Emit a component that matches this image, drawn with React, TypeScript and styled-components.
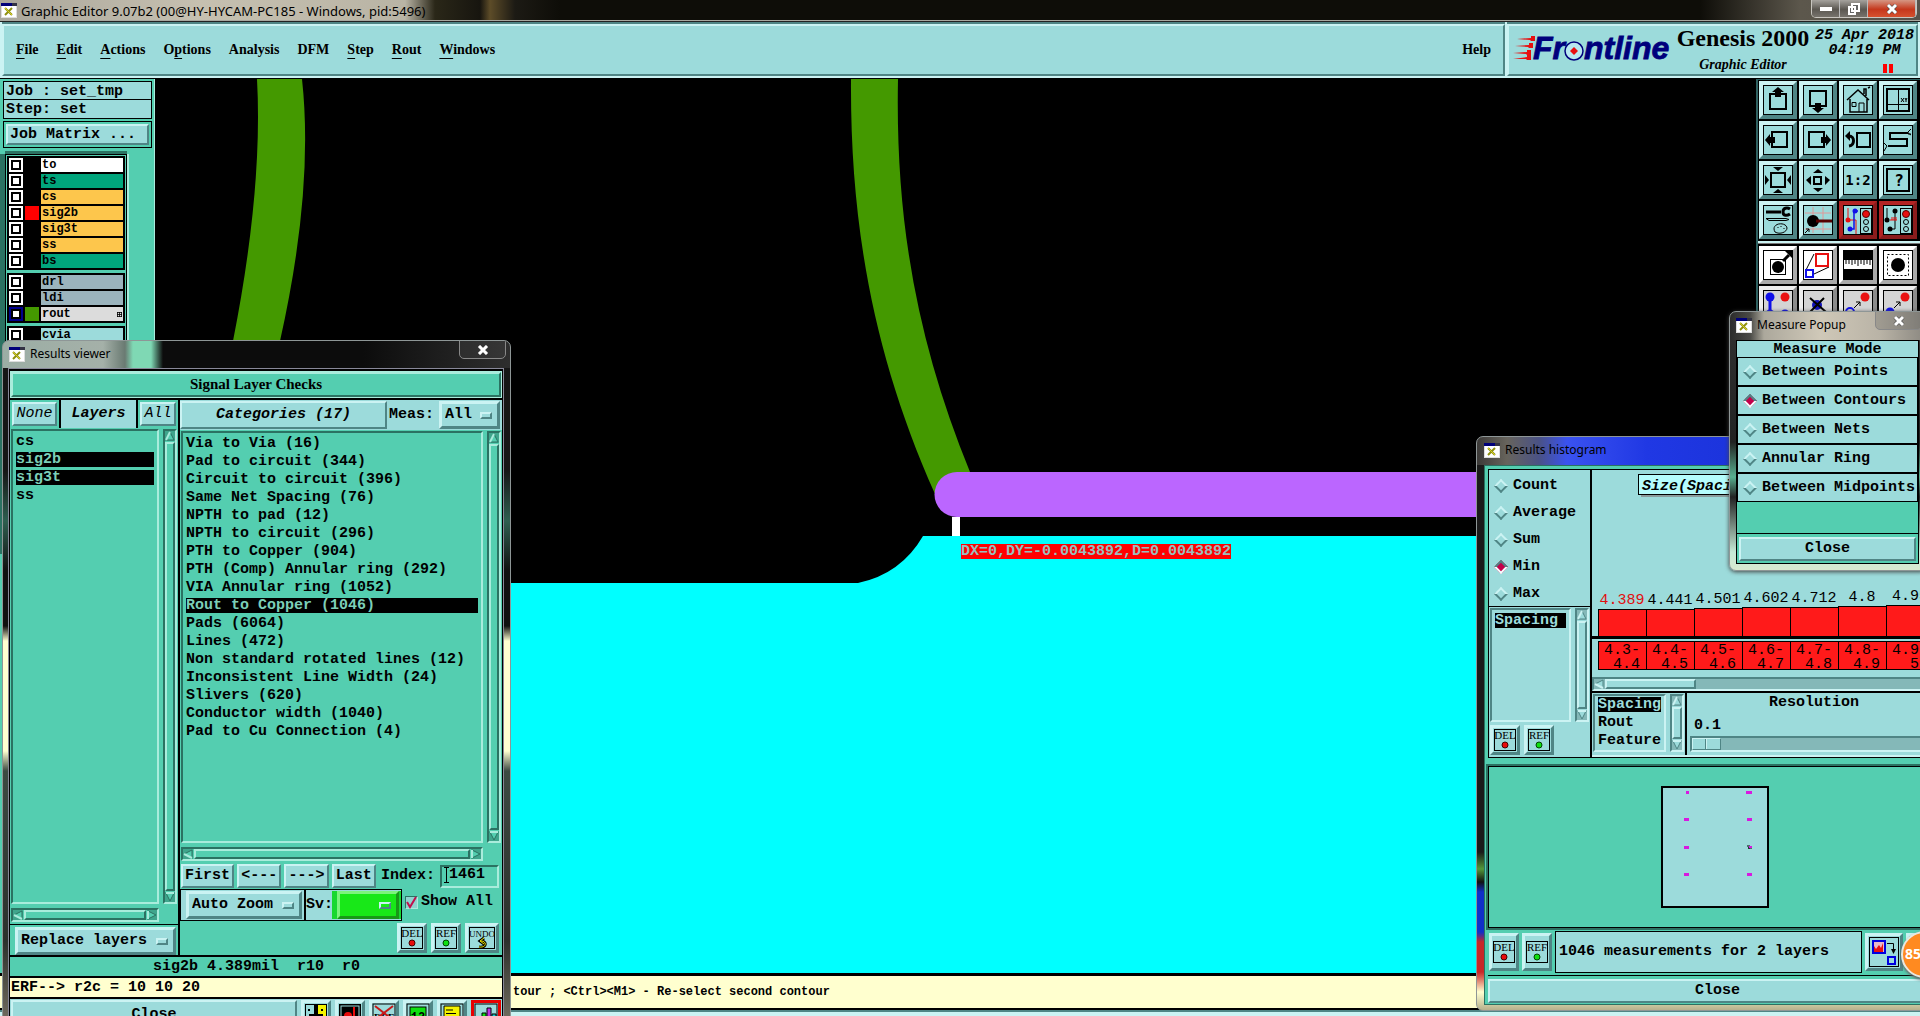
import React from "react";
import styled, { createGlobalStyle, css } from "styled-components";

const aqua = "#9cdbdb";
const aquaLight = "#cbf3f3";
const aquaDark = "#4f8585";
const green = "#54ceb0";
const greenLight = "#a9ecdc";
const greenDark = "#2b7262";
const mono = `"Liberation Mono", "Courier New", monospace`;
const serif = `"Liberation Serif", "Times New Roman", serif`;
const ui = `"Noto Sans", "Open Sans", sans-serif`;

const Global = createGlobalStyle`
  *, *::before, *::after { box-sizing: border-box; }
  html, body { margin: 0; height: 100%; overflow: hidden; background: #000; }
  body { font: bold 15px/18px ${mono}; color: #000; }
  button, input, select { font: inherit; color: inherit; margin: 0; padding: 0; }
  ul { list-style: none; margin: 0; padding: 0; }
  svg { display: block; flex: none; }
`;

const raised = css`
  background: ${aqua};
  border: 3px solid;
  border-color: ${aquaLight} ${aquaDark} ${aquaDark} ${aquaLight};
`;

/* ---------- main window ---------- */
const Page = styled.div`
  position: relative;
  display: flex;
  flex-direction: column;
  height: 100vh;
  overflow: hidden;
`;
const TitleBar = styled.header`
  display: flex;
  align-items: center;
  height: 22px;
  padding-left: 1px;
  gap: 4px;
  font: 13px/20px ${ui};
  border-bottom: 1px solid #222;
  box-shadow: inset 0 -1px #a8a8a0;
  background: linear-gradient(90deg, #aaa69b 0, #c6c0b0 200px, #b9b4a5 405px, #2a2718 435px, #17150f 480px, #5d4c28 490px, #1c1a14 515px, #0e0d08 560px, #0e0d08 1700px, #5c574c 1800px, #56524b 100%);
`;
const TitleText = styled.span`
  flex: 1;
`;
const WinButtons = styled.div`
  display: flex;
  align-self: flex-start;
  height: 18px;
  margin-right: 3px;
  border: 1px solid #c9c6c0;
  border-top: 0;
  border-radius: 0 0 5px 5px;
  overflow: hidden;
`;
const WinButton = styled.button<{ $close?: boolean }>`
  width: ${(p) => (p.$close ? 48 : 28)}px;
  display: flex;
  align-items: center;
  justify-content: center;
  border: 0;
  border-right: 1px solid #bbb;
  background: ${(p) =>
    p.$close
      ? "linear-gradient(#d59683, #c5371c 55%, #d6512f)"
      : "linear-gradient(#a5a29d, #5b5751 55%, #77736c)"};
`;
const MenuRow = styled.div`
  display: flex;
  height: 57px;
  background: ${aquaLight};
  border-bottom: 1px solid #000;
`;
const Bar = styled.div`
  display: flex;
  align-items: center;
  background: ${aqua};
  border: 2px solid;
  border-color: ${aquaLight} ${aquaDark} ${aquaDark} ${aquaLight};
  margin: 2px 2px 2px 0;
  box-shadow: 0 -2px ${aquaDark};
`;
const MenuBar = styled(Bar)`
  flex: 1;
  margin-left: 2px;
  padding: 0 12px;
  gap: 18px;
  font: bold 14px/18px ${serif};
`;
const MenuItem = styled.button<{ $last?: boolean }>`
  border: 0;
  background: none;
  margin-left: ${(p) => (p.$last ? "auto" : 0)};
  text-underline-offset: 4px;
`;
const Brand = styled(Bar)`
  width: 411px;
  padding-left: 4px;
  align-items: flex-start;
`;
const Product = styled.div`
  width: 140px;
  text-align: center;
  font: bold 14px/18px ${serif};
`;
const ProductName = styled.div`
  font-size: 24px;
  line-height: 24px;
`;
const ProductSub = styled.div`
  font-style: italic;
  padding-top: 6px;
`;
const Clock = styled.div`
  flex: 1;
  text-align: center;
  font-style: italic;
  line-height: 15px;
  padding-top: 2px;
  white-space: nowrap;
`;
const Pause = styled.div`
  width: 10px;
  height: 9px;
  margin: 6px 0 0 70px;
  border: solid #f00;
  border-width: 0 4px;
`;
const Work = styled.main`
  display: flex;
  flex: 1;
  min-height: 0;
`;
const LeftPanel = styled.aside`
  width: 155px;
  background: ${green};
  padding: 2px 2px 0 3px;
  overflow: hidden;
  border-right: 1px solid ${greenLight};
`;
const Info = styled.div`
  height: 19px;
  border: 1px solid #000;
  background: ${aqua};
  padding-left: 2px;
  line-height: 19px;
  & + & {
    border-top: 0;
  }
`;
const MatrixFrame = styled.div`
  border: 1px solid #000;
  height: 27px;
  margin-top: 2px;
  padding: 2px;
`;
const MatrixButton = styled.button`
  ${raised}
  display: block;
  width: 100%;
  height: 21px;
  text-align: left;
  border-width: 2px;
  padding-left: 2px;
  line-height: 16px;
`;
const LayerBox = styled.div`
  margin: 6px 25px 0 2px;
  padding: 1px;
  border: 1px solid #000;
  box-shadow: -5px 0 0 ${greenDark}, 0 -3px 0 ${greenDark}, 2px 0 0 ${greenLight};
  height: 400px;
`;
const LayerGroup = styled.div`
  background: #000;
  padding: 1px 2px 1px 2px;
  margin-bottom: 3px;
`;
const LayerRow = styled.label`
  display: flex;
  align-items: center;
  height: 16px;
  gap: 2px;
  font-size: 12px;
`;
const LayerCheck = styled.input<{ $active?: boolean }>`
  appearance: none;
  width: 14px;
  height: 14px;
  background: #fff;
  border: 2px solid ${(p) => (p.$active ? "#00008c" : "#fff")};
  outline: 2px solid #000;
  outline-offset: -4px;
`;
const Swatch = styled.span<{ $c: string }>`
  width: 14px;
  height: 14px;
  background: ${(p) => p.$c};
`;
const LayerName = styled.span<{ $c: string }>`
  flex: 1;
  display: flex;
  align-items: center;
  justify-content: space-between;
  height: 14px;
  line-height: 14px;
  padding: 0 1px;
  background: ${(p) => p.$c};
`;
const Canvas = styled.section`
  flex: 1;
  min-width: 0;
  position: relative;
  background: #000;
`;
const Plot = styled.svg`
  width: 100%;
  height: 100%;
`;
const Reading = styled.output`
  position: absolute;
  left: 806px;
  top: 465px;
  background: #f00;
  color: #9cbcbc;
  line-height: 15px;
`;
const Tools = styled.aside`
  width: 164px;
  background: #000;
  border-left: 2px solid #2f6262;
  overflow: hidden;
`;
const ToolGrid = styled.div<{ $grey?: boolean }>`
  display: grid;
  grid-template-columns: repeat(4, 38px);
  gap: 2px;
  padding: ${(p) => (p.$grey ? 2 : 1)}px 0 2px 1px;
  border-top: 1px solid ${(p) => (p.$grey ? "#777" : "#2f6262")};
  border-bottom: 2px solid ${(p) => (p.$grey ? "#777" : aquaLight)};
`;
const ToolButton = styled.button<{ $tone?: "red" | "white" | "grey" }>`
  ${raised}
  width: 38px;
  height: 38px;
  border-width: 4px;
  ${(p) =>
    p.$tone === "red" &&
    css`
      border-color: #b32424 #8a1c1c #8a1c1c #b32424;
    `}
  ${(p) =>
    p.$tone === "white" &&
    css`
      background: #fff;
      border-color: #fff #aaa #aaa #fff;
    `}
  ${(p) =>
    p.$tone === "grey" &&
    css`
      background: #d4d4d4;
      border-color: #eee #8b8b8b #8b8b8b #eee;
    `}
`;
const StatusBar = styled.footer`
  height: 37px;
  padding-left: 513px;
  border: solid #000;
  border-width: 3px 0 2px;
  background: #ffffcf;
  font-size: 12px;
  line-height: 32px;
  white-space: pre;
`;
const BottomStrip = styled.div`
  height: 6px;
  border-top: 2px solid ${aquaDark};
  background: ${aquaLight};
`;

/* ---------- floating windows ---------- */
const Window = styled.section`
  position: absolute;
  display: flex;
  flex-direction: column;
  border: 1px solid #8e9696;
  border-radius: 7px;
  overflow: hidden;
`;
const Caption = styled.div`
  display: flex;
  gap: 5px;
  height: 28px;
  margin-right: -3px;
  padding-top: 6px;
  font: 12px/14px ${ui};
`;
const CaptionText = styled.span`
  flex: 1;
`;
const CaptionClose = styled.button`
  width: 47px;
  height: 19px;
  margin-top: -7px;
  display: flex;
  justify-content: center;
  align-items: center;
  border: 1px solid #888;
  border-radius: 0 0 5px 5px;
  background: rgba(80, 80, 80, 0.25);
`;
const Push = styled.button<{ $w?: number; $plain?: boolean }>`
  ${raised}
  border-width: 2px;
  width: ${(p) => (p.$w ? p.$w + "px" : "auto")};
  font-weight: ${(p) => (p.$plain ? 400 : 700)};
  height: 24px;
  line-height: 20px;
`;
const IconPush = styled.button<{ $w?: number; $red?: boolean }>`
  ${raised}
  display: flex;
  flex: none;
  align-items: center;
  justify-content: center;
  width: ${(p) => p.$w ?? 30}px;
  height: 30px;
  ${(p) => p.$red && "border-color:#e80000;"}
`;
const Option = styled.label<{ $green?: boolean }>`
  ${raised}
  ${(p) => p.$green && "background:#18e818;border-color:#7cf47c #189818 #189818 #7cf47c;"}
  display: flex;
  align-items: center;
  height: 28px;
  padding: 0 5px 0 3px;
  &::after {
    content: "";
    width: 12px;
    height: 7px;
    flex: none;
    border: 2px solid;
    border-color: ${aquaLight} ${aquaDark} ${aquaDark} ${aquaLight};
  }
`;
const Select = styled.select`
  appearance: none;
  flex: 1;
  min-width: 0;
  border: 0;
  background: none;
`;

/* scroll bars */
const Track = styled.div<{ $v?: boolean; $c: "g" | "a"; $trough?: boolean }>`
  display: flex;
  flex-direction: ${(p) => (p.$v ? "column" : "row")};
  ${(p) => (p.$v ? "width:14px;" : "height:14px;")}
  border: 2px solid;
  gap: 1px;
  flex: none;
  background: ${(p) => (p.$trough ? "#84b8b8" : "none")};
  border-color: ${(p) =>
    p.$c === "g"
      ? `${greenDark} ${greenLight} ${greenLight} ${greenDark}`
      : `${aquaDark} ${aquaLight} ${aquaLight} ${aquaDark}`};
`;
const Thumb = styled.div<{ $c: "g" | "a"; $w?: number }>`
  flex: ${(p) => (p.$w ? "none" : 1)};
  ${(p) => p.$w && `width:${p.$w}px;`}
  background: ${(p) => (p.$c === "g" ? green : aqua)};
  border: 2px solid;
  border-color: ${(p) =>
    p.$c === "g"
      ? `${greenLight} ${greenDark} ${greenDark} ${greenLight}`
      : `${aquaLight} ${aquaDark} ${aquaDark} ${aquaLight}`};
`;
const ArrowButton = styled.button`
  border: 0;
  background: none;
  height: 10px;
  width: 10px;
  flex: none;
`;
const rot = { up: 0, right: 90, down: 180, left: 270 };
function Arrow({ dir, c }: { dir: keyof typeof rot; c: "g" | "a" }) {
  const l = c === "g" ? greenLight : aquaLight;
  const d = c === "g" ? greenDark : aquaDark;
  return (
    <ArrowButton aria-label={"Scroll " + dir}>
      <svg width="10" height="10" viewBox="0 0 10 10">
        <rect width="10" height="10" fill={c === "g" ? "#3fa58c" : "#84b8b8"} />
        <g transform={`rotate(${rot[dir]} 5 5)`}>
          <path d="M5 1 9 9H1z" fill={c === "g" ? green : aqua} stroke={d} />
          <path d={dir === "down" || dir === "right" ? "M1 9H9" : "M5 1 1 9"} stroke={l} strokeWidth="2" />
        </g>
      </svg>
    </ArrowButton>
  );
}
function Scroll({ v, c = "g", w, noEnd }: { v?: boolean; c?: "g" | "a"; w?: number; noEnd?: boolean }) {
  return (
    <Track $v={v} $c={c} $trough={!!w}>
      <Arrow dir={v ? "up" : "left"} c={c} />
      <Thumb $c={c} $w={w} />
      {!noEnd && <Arrow dir={v ? "down" : "right"} c={c} />}
    </Track>
  );
}

/* ---------- results viewer ---------- */
const Viewer = styled(Window)`
  left: 2px;
  top: 340px;
  bottom: -22px;
  width: 509px;
  padding: 0 7px 7px 6px;
  background: linear-gradient(90deg, rgba(170, 190, 180, 0.9) 0, rgba(200, 215, 205, 0.8) 100px, #6a7a72 122px, #7fd8b4 130px, #7fd8b4 148px, #0c0c0c 160px, #0c0c0c 360px, #2e2e2e) top / 100% 27px no-repeat,
    linear-gradient(#161616 0, #161616 130px, #2f5f50 180px, #101010 230px, #101010 285px, #ffffd0 300px, #ffffd0 410px, #3c4a42 430px, #2c302c 600px, #80796a);
`;
const ViewerBody = styled.div`
  flex: 1;
  min-height: 0;
  display: flex;
  flex-direction: column;
  gap: 2px;
  padding: 2px 1px 0;
  background: #000;
  box-shadow: 0 0 0 1px #889;
`;
const Heading = styled.h1`
  margin: 0;
  height: 27px;
  border: 3px solid;
  border-color: ${greenLight} ${greenDark} ${greenDark} ${greenLight};
  outline: 1px solid ${greenLight};
  outline-offset: -1px;
  background: ${green};
  text-align: center;
  font: bold 15px/20px ${serif};
`;
const Columns = styled.div`
  flex: 1;
  min-height: 0;
  display: grid;
  grid-template-columns: 168px minmax(0, 1fr);
  gap: 2px;
`;
const Column = styled.div`
  display: flex;
  flex-direction: column;
  min-height: 0;
  min-width: 0;
  background: ${green};
`;
const LayerHead = styled.div`
  display: flex;
  gap: 2px;
  height: 28px;
  background: #000;
  font-style: italic;
`;
const HeadCell = styled.div`
  background: ${green};
  padding: 2px;
`;
const HeadTitle = styled.div`
  flex: 1;
  background: ${aqua};
  text-align: center;
  line-height: 27px;
`;
const ListArea = styled.div`
  flex: 1;
  min-height: 0;
  display: grid;
  grid-template-columns: 1fr 14px;
  grid-template-rows: 1fr auto;
  gap: 4px;
  padding: 1px 1px 2px;
`;
const List = styled.ul<{ $c?: "a"; $tight?: boolean }>`
  min-height: 0;
  overflow: hidden;
  padding: ${(p) => (p.$tight ? 1 : 3)}px 3px;
  border: 2px solid;
  border-color: ${(p) =>
    p.$c ? `${aquaDark} ${aquaLight} ${aquaLight} ${aquaDark}` : `${greenDark} ${greenLight} ${greenLight} ${greenDark}`};
`;
const Item = styled.li<{ $sel?: boolean; $c?: string }>`
  height: 15px;
  line-height: 15px;
  margin-bottom: 3px;
  white-space: nowrap;
  ${(p) => p.$sel && `background:#000;color:${p.$c ?? "#7ccfb8"};`}
`;
const OptionCell = styled.div`
  height: 31px;
  border-top: 1px solid #000;
  padding: 2px 2px 1px 5px;
  background: ${green};
`;
const CatHead = styled.div`
  display: flex;
  height: 30px;
  align-items: center;
  background: ${aqua};
`;
const CatButton = styled(Push)`
  flex: 1;
  height: 28px;
  font-style: italic;
  border-width: 2px;
`;
const Meas = styled.span`
  padding: 0 5px 0 2px;
`;
const MeasOption = styled.div`
  width: 61px;
  margin-right: 2px;
`;
const NavRow = styled.div`
  display: flex;
  align-items: center;
  gap: 3px;
  height: 26px;
  padding: 0 3px 0 1px;
`;
const IndexLabel = styled.label`
  flex: 1;
  display: flex;
  align-items: center;
  gap: 5px;
  padding-left: 2px;
`;
const IndexBox = styled.span`
  flex: 1;
  display: flex;
  align-items: center;
  height: 23px;
  padding: 0 0 3px 2px;
  border: 2px solid;
  border-color: ${greenDark} ${greenLight} ${greenLight} ${greenDark};
`;
const IndexInput = styled.input`
  width: 48px;
  border: 0;
  background: none;
`;
const ZoomRow = styled.div`
  display: flex;
  align-items: center;
  height: 32px;
`;
const ZoomFrame = styled.div`
  display: flex;
  align-items: center;
  height: 32px;
  border: 1px solid #000;
  background: ${aqua};
`;
const ZoomCell = styled.div<{ $w: number; $bg?: string }>`
  width: ${(p) => p.$w}px;
  padding: 0 2px 0 5px;
  background: ${(p) => p.$bg ?? aqua};
`;
const SvText = styled.span`
  width: 28px;
  line-height: 30px;
  border-left: 2px solid #000;
`;
const ShowAll = styled.label`
  display: flex;
  align-items: center;
  gap: 3px;
  padding: 0 0 6px 3px;
`;
const Check = styled.input`
  appearance: none;
  width: 13px;
  height: 13px;
  background: #8fd3cf;
  border: 1px solid;
  border-color: ${greenDark} ${greenLight} ${greenLight} ${greenDark};
`;
const CheckWrap = styled.span`
  display: grid;
  align-items: center;
  & > * {
    grid-area: 1 / 1;
  }
  & > svg {
    pointer-events: none;
  }
`;
const ActionRow = styled.div`
  display: flex;
  justify-content: flex-end;
  align-items: center;
  gap: 4px;
  height: 34px;
  padding-right: 3px;
`;
const Strip = styled.div<{ $bg: string; $center?: boolean }>`
  height: 19px;
  line-height: 19px;
  padding-left: 1px;
  background: ${(p) => p.$bg};
  text-align: ${(p) => (p.$center ? "center" : "left")};
  white-space: pre;
`;
const FooterRow = styled.div`
  display: flex;
  gap: 4px;
  height: 31px;
  padding: 1px 1px 0;
  background: ${aqua};
`;
const FooterClose = styled(Push)`
  flex: 1;
  height: 30px;
`;

/* ---------- histogram ---------- */
const Histogram = styled(Window)`
  right: -37px;
  top: 436px;
  width: 481px;
  padding: 0 7px 5px;
  background: linear-gradient(90deg, #3c3a38 0, #67645c 30px, #4a5285 62px, #3a52f0 90px, #2038e4 170px, #1028c8) top / 100% 28px no-repeat,
    linear-gradient(#1a1a1a, #1a1a1a 415px, #53983a 432px, #111 445px, #1030c8 455px, #1030c8 495px, #c82828 505px, #c82828 535px, #ffffd0 555px, #b6b08c);
`;
const HistBody = styled.div`
  background: ${green};
  border: 1px solid ${greenDark};
  padding: 3px 1px 0 3px;
`;
const Upper = styled.div`
  display: flex;
  gap: 2px;
  height: 289px;
  border: 1px solid #000;
  background: #000;
`;
const Modes = styled.div`
  width: 101px;
  background: ${aqua};
`;
const ModeSet = styled.div`
  border-bottom: 1px solid #000;
  height: 137px;
  padding-top: 2px;
`;
const Mode = styled.label<{ $h: number }>`
  display: flex;
  align-items: center;
  gap: 7px;
  height: ${(p) => p.$h}px;
  padding-left: 7px;
`;
const Diamond = styled.input`
  appearance: none;
  width: 10px;
  height: 10px;
  transform: rotate(45deg);
  border: 2px solid;
  border-color: ${aquaLight} ${aquaDark} ${aquaDark} ${aquaLight};
  &:checked {
    background: #c4004a;
    border-color: ${aquaDark} #f3ffff #f3ffff ${aquaDark};
  }
`;
const SideList = styled.div<{ $h: number }>`
  display: grid;
  grid-template-columns: 1fr 14px;
  gap: 4px;
  height: ${(p) => p.$h}px;
  padding: 1px;
`;
const MiniButtons = styled.div`
  display: flex;
  gap: 4px;
  padding: 2px 1px;
`;
const ChartSide = styled.div`
  flex: 1;
  min-width: 0;
  display: flex;
  flex-direction: column;
  background: ${aqua};
  border-bottom: 2px solid ${aquaLight};
`;
const SizeBox = styled.div`
  align-self: flex-start;
  margin: 4px 0 0 46px;
  height: 21px;
  line-height: 23px;
  padding: 0 3px;
  background: #b5fcfc;
  border: 1px solid #000;
  box-shadow: 3px 2px #8a9c9c;
  font-style: italic;
`;
const Bars = styled.div`
  flex: 1;
  display: flex;
  align-items: flex-end;
  padding-left: 6px;
  border-bottom: 3px solid #000;
  overflow: hidden;
`;
const BarCol = styled.div<{ $first?: boolean }>`
  width: 48px;
  flex: none;
  text-align: center;
  font-weight: 400;
  line-height: 17px;
  color: ${(p) => (p.$first ? "#e01010" : "#000")};
`;
const BarFill = styled.div`
  background: #ff1a1a;
  border: solid #000;
  border-width: 1px 0 0 1px;
`;
const Ranges = styled.div`
  display: flex;
  margin: 2px 0 7px 6px;
  overflow: hidden;
`;
const Range = styled.div`
  width: 48px;
  height: 29px;
  flex: none;
  overflow: hidden;
  background: #ff1a1a;
  border: solid #000;
  border-width: 1px 0 1px 1px;
  padding: 2px 6px 0 0;
  text-align: right;
  font-weight: 400;
  line-height: 14px;
`;
const LowerRow = styled.div`
  display: flex;
  border-top: 2px solid #000;
  height: 64px;
`;
const FeatureBox = styled.div`
  width: 95px;
  border-right: 2px solid #000;
`;
const Resolution = styled.label`
  flex: 1;
  display: flex;
  flex-direction: column;
  padding: 1px 8px 0 3px;
`;
const ResTitle = styled.span`
  text-align: center;
`;
const ResValue = styled.span`
  padding: 5px 0 1px 4px;
`;
const Slider = styled.input`
  appearance: none;
  height: 16px;
  width: 100%;
  background: #84b8b8;
  border: 2px solid;
  border-color: ${aquaDark} ${aquaLight} ${aquaLight} ${aquaDark};
  &::-webkit-slider-thumb {
    appearance: none;
    width: 29px;
    height: 12px;
    background: linear-gradient(90deg, transparent 12px, ${aquaDark} 12px, ${aquaDark} 13px, ${aquaLight} 13px, ${aquaLight} 14px, transparent 14px), ${aqua};
    border: 1px solid;
    border-color: ${aquaLight} ${aquaDark} ${aquaDark} ${aquaLight};
  }
`;
const MapFrame = styled.div`
  display: flex;
  justify-content: center;
  margin-top: 8px;
  padding: 19px 6px 19px 0;
  border: 1px solid #000;
  box-shadow: 0 0 0 2px ${greenDark};
`;
const MeasureRow = styled.div`
  display: flex;
  align-items: center;
  gap: 3px;
  padding: 2px 0 2px 1px;
  height: 47px;
  & > button {
    height: 38px;
  }
`;
const MeasureText = styled.div`
  flex: none;
  width: 307px;
  height: 42px;
  border: 1px solid #000;
  background: ${aqua};
  padding-left: 3px;
  line-height: 40px;
`;
const WideClose = styled(Push)`
  width: 100%;
  display: block;
`;
const CloseFrame = styled.div`
  border-top: 1px solid #000;
  padding: 3px 0 1px;
`;
const Badge = styled.div`
  position: absolute;
  right: -28px;
  top: 931px;
  width: 47px;
  height: 47px;
  padding-left: 2px;
  border-radius: 50%;
  border: 2px solid #e8e8e0;
  background: #ff8a20;
  box-shadow: 0 2px 3px #666;
  color: #fff;
  font: bold 14px/42px ${ui};
`;

/* ---------- measure popup ---------- */
const Popup = styled(Window)`
  right: -7px;
  top: 311px;
  width: 198px;
  padding: 0 7px 6px 6px;
  background: linear-gradient(90deg, #2c2c2c 0, #4a4a46 20px, #aca89c 34px, #cfc8b8 90px, #b9b3a6 150px, #8a8780) top / 100% 28px no-repeat,
    linear-gradient(#333, #222 130px, #58b090 165px, #222 185px, #c5ead6 240px, #d8ead0);
  box-shadow: 0 1px 4px #444;
`;
const PopupBody = styled.div`
  background: ${green};
  border: 1px solid #000;
`;
const PopupTitle = styled.div`
  height: 16px;
  line-height: 17px;
  text-align: center;
  background: ${aqua};
`;
const PopupMode = styled.div`
  border: 1px solid #000;
  background: ${aqua};
`;
const PopupFoot = styled.div`
  margin-top: 31px;
  padding: 3px 2px 2px;
  border-top: 1px solid #000;
`;

/* ---------- drawings ---------- */
const AppIcon = () => (
  <svg width="16" height="15" viewBox="0 0 16 15">
    <rect width="16" height="15" fill="#ddd" />
    <rect width="11" height="3" fill="#00007a" />
    <rect x="11" width="5" height="3" fill="#334" />
    <rect x="1" y="3" width="14" height="11" fill="#fff" />
    <path d="M4 5l7 7M11 5l-7 7" stroke="#8f9010" strokeWidth="2" />
    <path d="M4 5l7 7" stroke="#d8d020" />
  </svg>
);
const Cross = () => (
  <svg width="12" height="10" viewBox="0 0 12 10">
    <path d="M2 1l8 8M10 1l-8 8" stroke="#444" strokeWidth="4" />
    <path d="M2 1l8 8M10 1l-8 8" stroke="#fff" strokeWidth="3" />
  </svg>
);
const Logo = () => (
  <svg width="160" height="46" viewBox="0 0 160 46">
    <g fill="#e81010">
      <path d="M4 13l14-1v-2h4v5h-4l-1-1z" />
      <path d="M2 20l14-1v-2h4v5h-4l-1-1z" />
      <path d="M0 27l14-1v-2h4v5h-4l-1-1z" />
      <path d="M0 33l14-2v-2h4v5h-4l-1-1z" />
    </g>
    <g fill="#00007c" stroke="#00007c" strokeWidth=".8" fontFamily="Liberation Sans, Arial, sans-serif" fontStyle="italic" fontWeight="700" fontSize="32">
      <text x="20" y="33">Fr</text>
      <text x="71" y="33">ntline</text>
    </g>
    <circle cx="61" cy="25" r="9" fill="#b8e8f0" stroke="#00007c" strokeWidth="1.5" />
    <path d="M61 21l4 4-4 4-4-4z" fill="#e81010" />
  </svg>
);
function Tag({ text, dot, w = 22, size = 11 }: { text: string; dot: React.ReactNode; w?: number; size?: number }) {
  return (
    <svg width={w + 2} height="24" viewBox={`0 0 ${w + 2} 24`}>
      <rect x="1.500" y="1.500" width={w - 1} height="21" fill="none" stroke="#000" />
      <text x={w / 2 + 1} y="11" textAnchor="middle" fontFamily="Liberation Serif, serif" fontWeight="400" fontSize={size}>
        {text}
      </text>
      {dot}
    </svg>
  );
}
const Red = <circle cx="12" cy="17" r="3" fill="#e80c0c" stroke="#400" />;
const Grn = <circle cx="12" cy="17" r="3" fill="#10e010" stroke="#040" />;
const Del = () => <IconPush aria-label="Delete"><Tag text="DEL" dot={Red} /></IconPush>;
const Ref = () => <IconPush aria-label="Refresh"><Tag text="REF" dot={Grn} /></IconPush>;

const S = { fill: "none", stroke: "#000", strokeWidth: 2 };
const Frame = () => <rect x=".5" y=".5" width="29" height="29" fill="none" stroke="#000" />;
const Light = () => (
  <g>
    <rect x="17.500" y="3.500" width="11" height="25" fill="#9cdbdb" stroke="#000" />
    <circle cx="23" cy="9" r="3.500" fill="#e81010" stroke="#500" />
    <circle cx="23" cy="17" r="2.500" fill="none" stroke="#000" />
    <circle cx="23" cy="24" r="2.500" fill="none" stroke="#000" />
  </g>
);
const tools: { n: string; t?: "red"; d: React.ReactNode }[] = [
  { n: "Pan up", d: <><rect x="7" y="9" width="16" height="15" {...S} /><path d="M15 2l6 5h-3v5h-6V7H9z" /></> },
  { n: "Pan down", d: <><rect x="7" y="6" width="16" height="15" {...S} /><path d="M15 28l6-5h-3v-5h-6v5H9z" /></> },
  { n: "Home", d: <><path d="M4 15L15 5l11 10M7 14v13h17V14M21 9V4h2v7M25 3l2-1" {...S} strokeWidth="1.500" /><path d="M9 17.500h4v4H9zM16 27v-9h5v9" fill="none" stroke="#000" /></> },
  { n: "Zoom XY", d: <><rect x="4" y="4" width="22" height="22" {...S} /><path d="M15.500 4v22M4 19.500h22M18 13l3 4m0-4l-3 4M22 13l1 2 1-2m-1 2v2" fill="none" stroke="#000" /></> },
  { n: "Pan left", d: <><rect x="9" y="7" width="15" height="15" {...S} /><path d="M2 15l5-6v3h5v6H7v3z" /></> },
  { n: "Pan right", d: <><rect x="6" y="7" width="15" height="15" {...S} /><path d="M28 15l-5-6v3h-5v6h5v3z" /></> },
  { n: "Previous view", d: <><rect x="14" y="8" width="13" height="14" {...S} /><path d="M4 11h2c6 0 6 9 0 10" {...S} strokeWidth="3" /><path d="M2 11l5-5v10z" /></> },
  { n: "Serpentine", d: <><path d="M25 8H7v6h17v7H5" {...S} /><path d="M28 4l-3 3v2h3M1 18l3 3-3 5M25 8l3 2" fill="none" stroke="#000" /></> },
  { n: "Zoom in", d: <><rect x="8" y="8" width="14" height="14" {...S} /><path d="M15 6l-5-4h10zM15 24l-5 4h10zM6 15l-4-5v10zM24 15l4-5v10z" /></> },
  { n: "Zoom out", d: <><rect x="11" y="12" width="7" height="7" {...S} /><path d="M15 4l5 4H10zM15 27l5-4H10zM3 15l5-4v9zM27 15l-5-4v9z" /></> },
  { n: "Scale 1:2", d: <text x="15" y="20" textAnchor="middle" fontFamily="DejaVu Sans Mono, monospace" fontWeight="700" fontSize="14">1:2</text> },
  { n: "Help", d: <><rect x="4" y="4" width="22" height="22" {...S} /><text x="16" y="21" textAnchor="middle" fontFamily="DejaVu Sans Mono, monospace" fontWeight="700" fontSize="16">?</text></> },
  { n: "Setup", d: <><path d="M3 7h15" {...S} strokeWidth="3" /><path d="M27 4c-3-2-7-1-7 3s4 4 7 2" {...S} strokeWidth="3" /><path d="M3 13.500h20l3 1-3 1H6zM12 27c-5-9 11-11 12-4 0 4-7 7-12 4zM15 22v1m3-2v1m3 1v1" fill="none" stroke="#000" /></> },
  { n: "Snap", d: <><path d="M10 2v26M20 2v26M2 8h26M2 24h26" stroke="#e09898" /><circle cx="10" cy="16" r="6" /><path d="M13 16h16" stroke="#500" strokeWidth="3" /><path d="M2 28l4-4m-3 0h3v3" fill="none" stroke="#000" /></> },
  { n: "Net colour control", t: "red", d: <><Light /><path d="M5 3v12h8v14" fill="none" stroke="#e81010" /><path d="M7 24h4V6h4" fill="none" stroke="#1010e8" strokeWidth="1.500" /><circle cx="5" cy="15" r="2.500" fill="#e81010" /><circle cx="7" cy="24" r="2.500" fill="#1010e8" /><circle cx="12" cy="6" r="2.500" fill="#1010e8" /></> },
  { n: "Net control", t: "red", d: <><Light /><path d="M4 3v12M8 24h4V6" fill="none" stroke="#000" /><path d="M7 15h7m-5-3v3m2-3v3m2-3v3" stroke="#e81010" fill="none" /><circle cx="4" cy="15" r="2.500" /><circle cx="7" cy="24" r="2.500" /><circle cx="12" cy="6" r="2.500" /></> },
];
const greyTools: { n: string; t: "white" | "grey"; d: React.ReactNode }[] = [
  { n: "Edit feature", t: "white", d: <><rect x="7.500" y="9.500" width="15" height="15" fill="none" stroke="#000" /><circle cx="15" cy="17" r="6" /><path d="M20 11l6-6" stroke="#000" strokeWidth="3" /><path d="M22 1h8v8z" /></> },
  { n: "Transform", t: "white", d: <><path d="M3 20L11 4M11 24l15-7" stroke="#000" /><rect x="13" y="4" width="12" height="12" fill="#fff" stroke="#e81010" strokeWidth="2" /><rect x="3" y="20" width="7" height="7" fill="#fff" stroke="#1010e8" strokeWidth="2" /></> },
  { n: "Measure", t: "white", d: <><rect width="30" height="30" /><path d="M1 10v9h28v-9" fill="#fff" /><path d="M3 10v4m3-4v4m3-4v5m3-5v4m3-4v6m3-6v4m3-4v5m3-5v4m3-4v5" stroke="#000" /></> },
  { n: "Select", t: "white", d: <><circle cx="15" cy="15" r="7" /><rect x="4.500" y="4.500" width="21" height="21" fill="none" stroke="#000" strokeDasharray="2 2" /></> },
  { n: "Connect pads", t: "grey", d: <><path d="M7 7v17" stroke="#1010e8" strokeWidth="3" /><circle cx="7" cy="7" r="4.500" fill="#1010e8" /><circle cx="22" cy="7" r="4.500" fill="#e81010" /><circle cx="7" cy="24" r="4.500" fill="#1010e8" /><circle cx="22" cy="24" r="4.500" fill="#1010e8" /></> },
  { n: "Delete feature", t: "grey", d: <><circle cx="14" cy="15" r="5" fill="#1010b8" /><path d="M7 8l16 14M21 8L7 22" stroke="#000" strokeWidth="2" /></> },
  { n: "Move", t: "grey", d: <><circle cx="22" cy="7" r="4.500" fill="#e81010" /><circle cx="7" cy="22" r="4" fill="none" stroke="#1010e8" strokeWidth="2" /><path d="M11 18l6-6m-4 0h4v4" fill="none" stroke="#000" /></> },
  { n: "Copy", t: "grey", d: <><circle cx="22" cy="7" r="4.500" fill="#e81010" /><circle cx="7" cy="22" r="4.500" fill="#1010e8" /><path d="M11 18l6-6m-4 0h4v4" fill="none" stroke="#000" /></> },
];
const footerIcons: { n: string; red?: boolean; d: React.ReactNode }[] = [
  { n: "Split", d: <><rect x="1" y="1" width="22" height="22" /><rect x="2" y="2" width="8" height="20" fill="#9cdbdb" /><rect x="14" y="2" width="8" height="20" fill="#f4f400" /><path d="M5 12h14M5 6v2M18 6v2" stroke="#000" strokeWidth="2" /></> },
  { n: "Highlight", d: <><rect x="1" y="1" width="22" height="22" /><rect x="3" y="3" width="18" height="18" fill="#000" stroke="#9cdbdb" /><circle cx="10" cy="13" r="4" fill="#e80c0c" /><path d="M16 4v14H8" stroke="#e80c0c" strokeWidth="2" fill="none" /></> },
  { n: "Clear reference", d: <><rect x="1" y="1" width="22" height="22" fill="#9cdbdb" stroke="#000" /><text x="12" y="18" textAnchor="middle" fontFamily="Liberation Serif, serif" fontSize="10">REF</text><path d="M3 3l18 14M21 3L4 16" stroke="#c81818" strokeWidth="2" /></> },
  { n: "Numbers", d: <><rect x="1" y="1" width="22" height="22" fill="#9cdbdb" stroke="#000" /><rect x="4" y="4" width="16" height="18" fill="#10e010" stroke="#000" /><text x="12" y="18" textAnchor="middle" fontFamily="Liberation Mono, monospace" fontWeight="700" fontSize="12">12</text></> },
  { n: "Report", d: <><rect x="1" y="1" width="22" height="22" fill="#9cdbdb" stroke="#000" /><path d="M4 3h16v15l-4 4H4z" fill="#f4f400" stroke="#000" /><path d="M6 7h7M6 10.500h10M6 14h10" stroke="#000" /></> },
  { n: "Histogram", red: true, d: <><rect x="1" y="1" width="22" height="22" fill="#9cdbdb" stroke="#000" /><path d="M3 14h4v9H3z" fill="#e80c0c" stroke="#000" /><path d="M8 10h4v13H8z" fill="#10e010" stroke="#000" /><path d="M13 5h4v18h-4z" fill="#c030e0" stroke="#000" /><path d="M18 11h4v12h-4z" fill="#10d0d0" stroke="#000" /></> },
];

/* ---------- data ---------- */
const layerGroups = [
  [["to", "#fff"], ["ts", "#00a57c"], ["cs", "#fdc64c"], ["sig2b", "#fdc64c", "#f00"], ["sig3t", "#fdc64c"], ["ss", "#fdc64c"], ["bs", "#00a57c"]],
  [["drl", "#9bb4bd"], ["ldi", "#9bb4bd"], ["rout", "#dcdcdc", "#449900"]],
  [["cvia", aqua]],
];
const categories = [
  "Via to Via (16)", "Pad to circuit (344)", "Circuit to circuit (396)", "Same Net Spacing (76)", "NPTH to pad (12)",
  "NPTH to circuit (296)", "PTH to Copper (904)", "PTH (Comp) Annular ring (292)", "VIA Annular ring (1052)",
  "Rout to Copper (1046)", "Pads (6064)", "Lines (472)", "Non standard rotated lines (12)",
  "Inconsistent Line Width (24)", "Slivers (620)", "Conductor width (1040)", "Pad to Cu Connection (4)",
];
const bars: [string, number, string, string][] = [
  ["4.389", 27, "4.3-", "4.4"], ["4.441", 27, "4.4-", "4.5"], ["4.501", 28, "4.5-", "4.6"], ["4.602", 29, "4.6-", "4.7"],
  ["4.712", 29, "4.7-", "4.8"], ["4.8", 30, "4.8-", "4.9"], ["4.95", 31, "4.9-", "5\u00a0"],
];
const menus: [string, number][] = [
  ["File", 0], ["Edit", 0], ["Actions", 0], ["Options", 1], ["Analysis", -1], ["DFM", -1], ["Step", 0], ["Rout", 0], ["Windows", 0],
];
const mapDots = [[25, 5, 3], [85, 5, 6], [23, 32, 5], [86, 32, 5], [23, 60, 5], [23, 87, 5], [86, 87, 5]];

function ResultsViewer() {
  return (
    <Viewer aria-label="Results viewer">
      <Caption>
        <AppIcon />
        <CaptionText>Results viewer</CaptionText>
        <CaptionClose aria-label="Close window"><Cross /></CaptionClose>
      </Caption>
      <ViewerBody>
        <Heading>Signal Layer Checks</Heading>
        <Columns>
          <Column>
            <LayerHead>
              <HeadCell><Push $w={45} $plain>None</Push></HeadCell>
              <HeadTitle>Layers</HeadTitle>
              <HeadCell><Push $w={36} $plain>All</Push></HeadCell>
            </LayerHead>
            <ListArea>
              <List role="listbox" aria-label="Layers">
                {["cs", "sig2b", "sig3t", "ss"].map((l, i) => (
                  <Item key={l} role="option" aria-selected={i === 1 || i === 2} $sel={i === 1 || i === 2}>{l}</Item>
                ))}
              </List>
              <Scroll v />
              <Scroll />
            </ListArea>
            <OptionCell>
              <Option><Select aria-label="Layer mode"><option>Replace layers</option></Select></Option>
            </OptionCell>
          </Column>
          <Column>
            <CatHead>
              <CatButton>Categories (17)</CatButton>
              <Meas>Meas:</Meas>
              <MeasOption><Option><Select aria-label="Meas"><option>All</option></Select></Option></MeasOption>
            </CatHead>
            <ListArea>
              <List role="listbox" aria-label="Categories">
                {categories.map((c, i) => (
                  <Item key={c} role="option" aria-selected={i === 9} $sel={i === 9}>{c}</Item>
                ))}
              </List>
              <Scroll v />
              <Scroll />
            </ListArea>
            <NavRow>
              <Push $w={54}>First</Push>
              <Push $w={45}>&lt;---</Push>
              <Push $w={45}>---&gt;</Push>
              <Push $w={45}>Last</Push>
              <IndexLabel>
                Index:
                <IndexBox>
                  <svg width="5" height="16" viewBox="0 0 5 16"><path d="M0 .5h5M0 15.500h5M2.500 0v16" stroke="#000" /></svg>
                  <IndexInput defaultValue="1461" />
                </IndexBox>
              </IndexLabel>
            </NavRow>
            <ZoomRow>
              <ZoomFrame>
                <ZoomCell $w={123}><Option><Select aria-label="Zoom"><option>Auto Zoom</option></Select></Option></ZoomCell>
                <SvText>Sv:</SvText>
                <ZoomCell $w={69} $bg="#18d830"><Option $green><Select aria-label="Severity"><option> </option></Select></Option></ZoomCell>
              </ZoomFrame>
              <ShowAll>
                <CheckWrap>
                  <Check type="checkbox" defaultChecked />
                  <svg width="13" height="13" viewBox="0 0 13 13"><path d="M2 6l3 5 6-10" fill="none" stroke="#c0104c" strokeWidth="2" /></svg>
                </CheckWrap>
                Show All
              </ShowAll>
            </ZoomRow>
            <ActionRow>
              <Del />
              <Ref />
              <IconPush $w={34} aria-label="Undo">
                <Tag text="UNDO" w={26} size={9} dot={<><path d="M11 21c8 1 8-6 2-6m3-3l-4 3 4 3" fill="none" stroke="#000" strokeWidth="3" /><path d="M11 21c8 1 8-6 2-6m3-3l-4 3 4 3" fill="none" stroke="#f4e800" /></>} />
              </IconPush>
            </ActionRow>
          </Column>
        </Columns>
        <Strip $bg={green} $center>{"sig2b 4.389mil  r10  r0"}</Strip>
        <Strip $bg="#ffffcf">{"ERF--> r2c = 10 10 20"}</Strip>
        <FooterRow>
          <FooterClose>Close</FooterClose>
          {footerIcons.map((f) => (
            <IconPush key={f.n} aria-label={f.n} $red={f.red}>
              <svg width="24" height="24" viewBox="0 0 24 24">{f.d}</svg>
            </IconPush>
          ))}
        </FooterRow>
      </ViewerBody>
    </Viewer>
  );
}

function ResultsHistogram() {
  return (
    <Histogram aria-label="Results histogram">
      <Caption>
        <AppIcon />
        <CaptionText>Results histogram</CaptionText>
      </Caption>
      <HistBody>
        <Upper>
          <Modes>
            <ModeSet>
              {["Count", "Average", "Sum", "Min", "Max"].map((m) => (
                <Mode key={m} $h={27}><Diamond type="radio" name="stat" defaultChecked={m === "Min"} />{m}</Mode>
              ))}
            </ModeSet>
            <SideList $h={116}>
              <List $c="a"><Item $sel $c={aqua}>Spacing</Item></List>
              <Scroll v c="a" />
            </SideList>
            <MiniButtons><Del /><Ref /></MiniButtons>
          </Modes>
          <ChartSide>
            <SizeBox>Size(Spacing)</SizeBox>
            <Bars>
              {bars.map(([v, h], i) => (
                <BarCol key={v} $first={i === 0}>{v}<BarFill style={{ height: h }} /></BarCol>
              ))}
            </Bars>
            <Ranges>
              {bars.map(([v, , a, b]) => <Range key={v}>{a}<br />{b}</Range>)}
            </Ranges>
            <Scroll c="a" w={91} noEnd />
            <LowerRow>
              <FeatureBox>
                <SideList $h={60}>
                  <List $c="a" $tight>
                    <Item $sel $c={aqua}>Spacing</Item>
                    <Item>Rout</Item>
                    <Item>Feature</Item>
                  </List>
                  <Scroll v c="a" />
                </SideList>
              </FeatureBox>
              <Resolution>
                <ResTitle>Resolution</ResTitle>
                <ResValue>0.1</ResValue>
                <Slider type="range" min="0" max="10" step="0.1" defaultValue="0" />
              </Resolution>
            </LowerRow>
          </ChartSide>
        </Upper>
        <MapFrame>
          <svg width="108" height="122" viewBox="0 0 108 122">
            <rect x="1" y="1" width="106" height="120" fill={aqua} stroke="#000" strokeWidth="2" />
            {mapDots.map(([x, y, w]) => <rect key={x + "-" + y} x={x} y={y} width={w} height="3" fill="#d818e0" />)}
            <path d="M86 60h3v2h-2m4 0h-4" stroke="#000" fill="none" />
            <rect x="88" y="60" width="3" height="2" fill="#d818e0" />
          </svg>
        </MapFrame>
        <MeasureRow>
          <Del />
          <Ref />
          <MeasureText>1046 measurements for 2 layers</MeasureText>
          <IconPush $w={38} aria-label="Copy histogram">
            <svg width="30" height="30" viewBox="0 0 30 30">
              <Frame />
              <rect x="4" y="4" width="12" height="12" fill="#e8b8c8" stroke="#0000e0" strokeWidth="2" />
              <path d="M5 15V9l2 3 3-4 2 3 2-5v9z" fill="#e81010" />
              <rect x="19" y="20" width="7" height="7" fill="none" stroke="#0000e0" strokeWidth="2" />
              <path d="M18 6.500h6.500V15" fill="none" stroke="#000" />
              <path d="M22 12h5l-2.500 5z" />
            </svg>
          </IconPush>
          <IconPush $w={38} aria-label="More" />
        </MeasureRow>
        <CloseFrame><WideClose>Close</WideClose></CloseFrame>
      </HistBody>
    </Histogram>
  );
}

function MeasurePopup() {
  return (
    <Popup aria-label="Measure Popup">
      <Caption>
        <AppIcon />
        <CaptionText>Measure Popup</CaptionText>
        <CaptionClose aria-label="Close window"><Cross /></CaptionClose>
      </Caption>
      <PopupBody>
        <PopupTitle>Measure Mode</PopupTitle>
        {["Points", "Contours", "Nets", "Annular Ring", "Midpoints"].map((m) => (
          <PopupMode key={m}>
            <Mode $h={27}>
              <Diamond type="radio" name="measure" defaultChecked={m === "Contours"} />
              {m === "Annular Ring" ? m : "Between " + m}
            </Mode>
          </PopupMode>
        ))}
        <PopupFoot><WideClose>Close</WideClose></PopupFoot>
      </PopupBody>
    </Popup>
  );
}

export default function App() {
  return (
    <Page>
      <Global />
      <TitleBar>
        <AppIcon />
        <TitleText>Graphic Editor 9.07b2 (00@HY-HYCAM-PC185 - Windows, pid:5496)</TitleText>
        <WinButtons>
          <WinButton aria-label="Minimize"><svg width="12" height="5"><rect width="12" height="4" y="1" fill="#fff" /></svg></WinButton>
          <WinButton aria-label="Restore"><svg width="12" height="12" viewBox="0 0 12 12"><path d="M4 1h7v7H4zM1 4h6v7H1z" fill="#666" stroke="#fff" strokeWidth="2" /></svg></WinButton>
          <WinButton $close aria-label="Close"><Cross /></WinButton>
        </WinButtons>
      </TitleBar>
      <MenuRow>
        <MenuBar as="nav">
          {menus.map(([m, u]) => (
            <MenuItem key={m}>{u < 0 ? m : <>{m.slice(0, u)}<u>{m[u]}</u>{m.slice(u + 1)}</>}</MenuItem>
          ))}
          <MenuItem $last>Help</MenuItem>
        </MenuBar>
        <Brand>
          <Logo />
          <Product>
            <ProductName>Genesis 2000</ProductName>
            <ProductSub>Graphic Editor</ProductSub>
          </Product>
          <Clock>25 Apr 2018<br />04:19 PM<Pause /></Clock>
        </Brand>
      </MenuRow>
      <Work>
        <LeftPanel>
          <Info>Job : set_tmp</Info>
          <Info>Step: set</Info>
          <MatrixFrame><MatrixButton>Job Matrix ...</MatrixButton></MatrixFrame>
          <LayerBox>
            {layerGroups.map((g, i) => (
              <LayerGroup key={i}>
                {g.map(([n, c, s]) => (
                  <LayerRow key={n}>
                    <LayerCheck type="checkbox" $active={n === "rout"} />
                    <Swatch $c={s ?? "#000"} />
                    <LayerName $c={c}>
                      {n}
                      {n === "rout" && <svg width="5" height="5" viewBox="0 0 5 5"><path d="M0 .5h5M0 2.500h5M0 4.500h5M.5 0v5M2.500 0v5M4.500 0v5" stroke="#000" strokeWidth=".8" /></svg>}
                    </LayerName>
                  </LayerRow>
                ))}
              </LayerGroup>
            ))}
          </LayerBox>
        </LeftPanel>
        <Canvas>
          <Plot>
            <path d="M102 0Q108 110 78 262H125Q159 110 147 0z" fill="#449900" />
            <path d="M696 0C695 150 720 280 780 415L815 393C765 270 740 150 743 0z" fill="#449900" />
            <path d="M0 504H703Q746 495 768 457H2400V894H0z" fill="#00ffff" />
            <path d="M2400 393H802a22.500 22.500 0 0 0 0 45H2400z" fill="#bb66ff" />
            <rect x="797" y="438" width="8" height="19" fill="#fff" />
          </Plot>
          <Reading>DX=0,DY=-0.0043892,D=0.0043892</Reading>
        </Canvas>
        <Tools>
          <ToolGrid>
            {tools.map((t) => (
              <ToolButton key={t.n} aria-label={t.n} $tone={t.t}><svg width="30" height="30" viewBox="0 0 30 30">{t.d}<Frame /></svg></ToolButton>
            ))}
          </ToolGrid>
          <ToolGrid $grey>
            {greyTools.map((t) => (
              <ToolButton key={t.n} aria-label={t.n} $tone={t.t}><svg width="30" height="30" viewBox="0 0 30 30">{t.d}<Frame /></svg></ToolButton>
            ))}
          </ToolGrid>
        </Tools>
      </Work>
      <StatusBar>{"tour ; <Ctrl><M1> - Re-select second contour"}</StatusBar>
      <BottomStrip />
      <ResultsViewer />
      <ResultsHistogram />
      <MeasurePopup />
      <Badge>85</Badge>
    </Page>
  );
}
